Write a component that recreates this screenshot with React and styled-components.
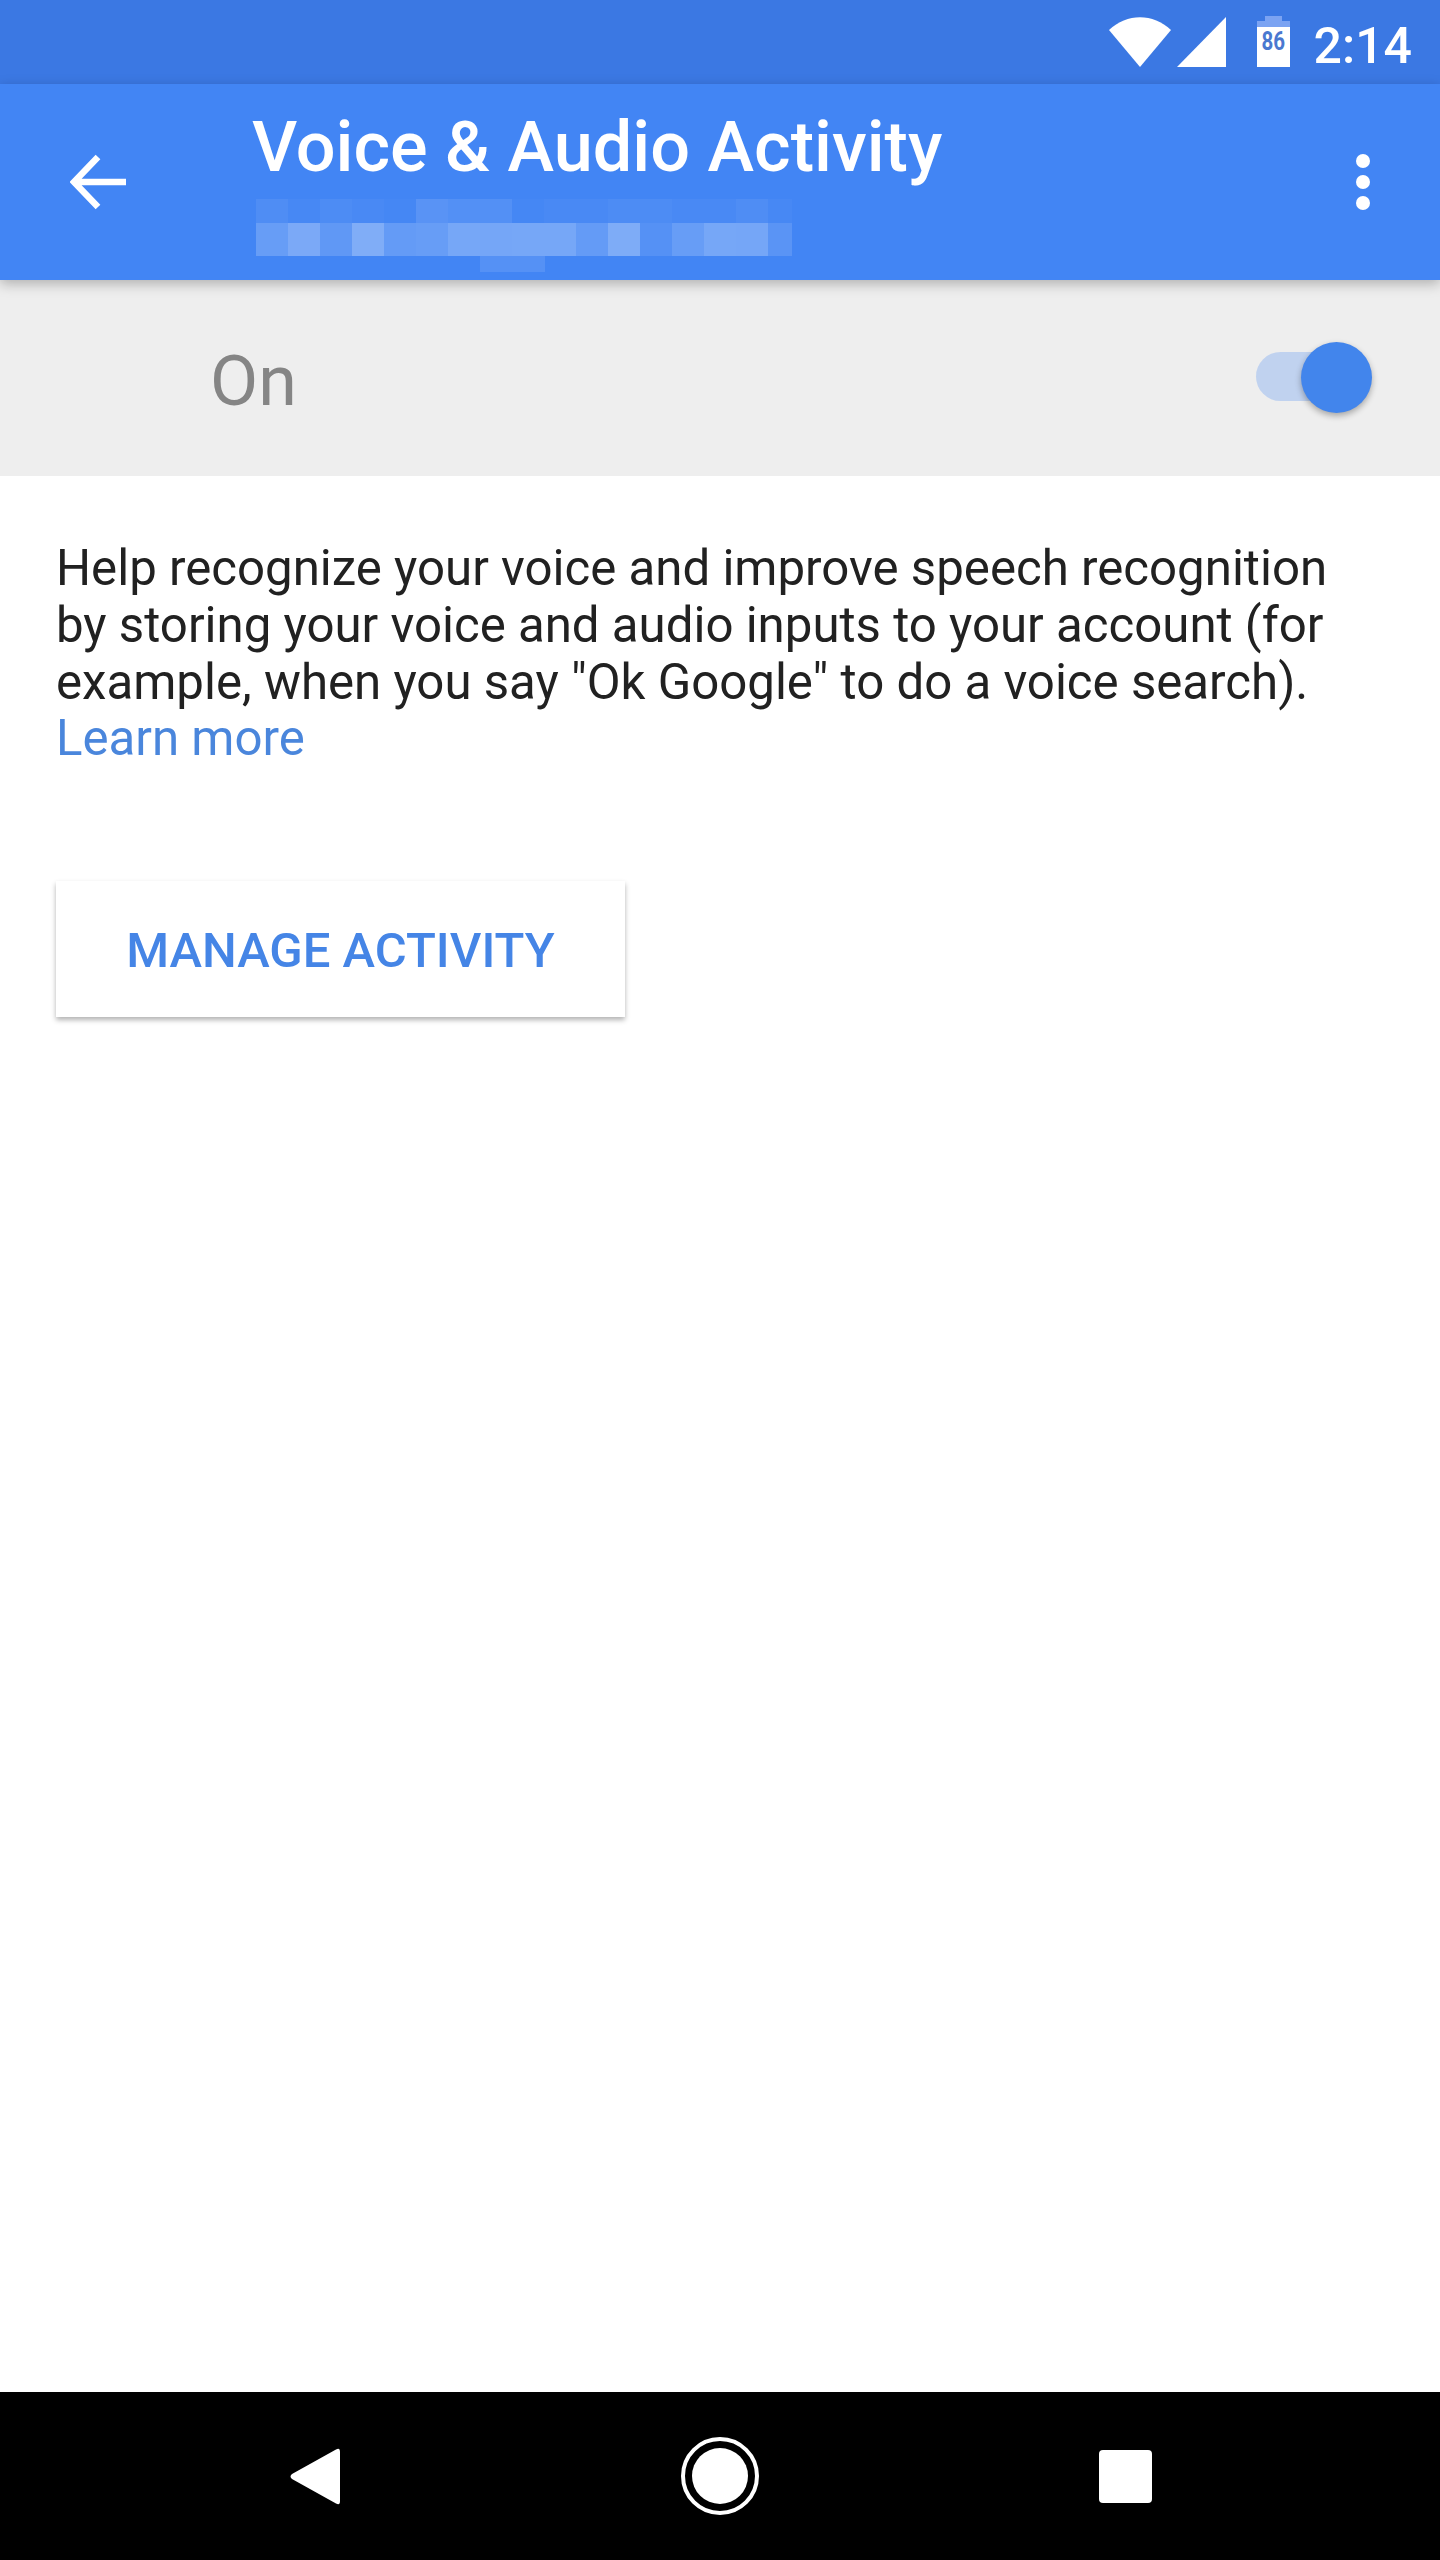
import React from "react";
import styled, { createGlobalStyle } from "styled-components";

const GlobalStyle = createGlobalStyle`
  html, body {
    margin: 0;
    padding: 0;
    background: #fff;
  }
  body {
    font-family: Roboto, "Liberation Sans", sans-serif;
  }
`;

const mosaicTop = [0.07, 0.03, 0.06, 0.04, 0.02, 0.12, 0.09, 0.09, 0.02, 0.04, 0.04, 0.06, 0.06, 0.04, 0.04, 0.07, 0.03];
const mosaicBottom = [0.2, 0.3, 0.16, 0.33, 0.18, 0.2, 0.28, 0.27, 0.28, 0.28, 0.18, 0.32, 0.1, 0.2, 0.28, 0.27, 0.13];

function App() {
  return (
    <Page>
      <GlobalStyle />
      <StatusBar>
        <svg width="62" height="50" viewBox="0 0 62 50">
          <path d="M0 13 C18 -4 44 -4 62 13 L31 50 Z" fill="#fff" />
        </svg>
        <SignalIcon width="49" height="50" viewBox="0 0 49 50">
          <path d="M49 0 V50 H0 Z" fill="#fff" />
        </SignalIcon>
        <Battery>
          <BatteryCap />
          <BatteryTop />
          <BatteryBody>
            <BatteryLevel>86</BatteryLevel>
          </BatteryBody>
        </Battery>
        <Clock>2:14</Clock>
      </StatusBar>
      <AppBar>
        <BackButton>
          <svg width="56" height="56" viewBox="0 0 56 56">
            <path d="M28 3 L4 28 L28 53 M4 28 H56" fill="none" stroke="#fff" strokeWidth="6.5" />
          </svg>
        </BackButton>
        <TitleBlock>
          <Title>Voice &amp; Audio Activity</Title>
          <Mosaic>
            {mosaicTop.map((o, i) => (
              <MosaicCell key={"t" + i} style={{ opacity: o }} />
            ))}
            {mosaicBottom.map((o, i) => (
              <MosaicCell key={"b" + i} style={{ opacity: o }} />
            ))}
          </Mosaic>
          <MosaicStub />
        </TitleBlock>
        <MoreButton>
          <Dot />
          <Dot />
          <Dot />
        </MoreButton>
      </AppBar>
      <ToggleRow>
        <ToggleLabel>On</ToggleLabel>
        <Switch>
          <Track />
          <Thumb />
        </Switch>
      </ToggleRow>
      <Content>
        <Description>
          Help recognize your voice and improve speech recognition
          <br />
          by storing your voice and audio inputs to your account (for
          <br />
          example, when you say "Ok Google" to do a voice search).
          <br />
          <LearnMore>Learn more</LearnMore>
        </Description>
        <ManageButton>MANAGE ACTIVITY</ManageButton>
      </Content>
      <NavBar>
        <svg width="50" height="57" viewBox="0 0 50 57">
          <path d="M46 1.5 Q50 -1 50 4 V53 Q50 58 46 55.5 L2 31 Q-1 28.5 2 26 Z" fill="#fff" />
        </svg>
        <HomeButton>
          <HomeInner />
        </HomeButton>
        <RecentButton />
      </NavBar>
    </Page>
  );
}

const Page = styled.div`
  width: 1440px;
  height: 2560px;
  display: flex;
  flex-direction: column;
  background: #fff;
  overflow: hidden;
`;

const StatusBar = styled.div`
  height: 84px;
  flex: none;
  display: flex;
  align-items: flex-start;
  padding: 17px 28px 0 0;
  box-sizing: border-box;
  justify-content: flex-end;
  background: #3b78e3;
`;

const SignalIcon = styled.svg`
  margin-left: 6px;
`;

const Battery = styled.div`
  width: 33px;
  height: 51px;
  margin: -1px 0 0 31px;
  display: flex;
  flex-direction: column;
  align-items: center;
`;

const BatteryCap = styled.div`
  width: 17px;
  height: 5px;
  background: #7ba3f2;
`;

const BatteryTop = styled.div`
  width: 100%;
  height: 6px;
  background: #7ba3f2;
`;

const BatteryBody = styled.div`
  width: 100%;
  flex: 1;
  background: #fff;
  color: #4a78d0;
  font-size: 25px;
  font-weight: 700;
  line-height: 30px;
  text-align: center;
`;

const BatteryLevel = styled.span`
  display: inline-block;
  transform: scaleX(0.82);
`;

const Clock = styled.div`
  margin: -1px 0 0 24px;
  color: #fff;
  font-size: 50px;
  font-weight: 500;
  line-height: 60px;
`;

const AppBar = styled.header`
  height: 196px;
  flex: none;
  display: flex;
  align-items: flex-start;
  background: #4285f4;
  position: relative;
  z-index: 1;
  box-shadow: 0 4px 12px rgba(0, 0, 0, 0.26);
`;

const BackButton = styled.div`
  width: 252px;
  flex: none;
  padding: 70px 0 0 70px;
  box-sizing: border-box;
  display: flex;
`;

const TitleBlock = styled.div`
  flex: 1;
  display: flex;
  flex-direction: column;
`;

const Title = styled.h1`
  margin: 23px 0 0;
  color: #fff;
  font-size: 70.2px;
  font-weight: 500;
  line-height: 80px;
  white-space: nowrap;
`;

const Mosaic = styled.div`
  margin: 12px 0 0 4px;
  display: grid;
  grid-template-columns: repeat(16, 32px) 24px;
  grid-template-rows: 24px 33px;
`;

const MosaicCell = styled.div`
  background: #fff;
`;

const MosaicStub = styled.div`
  width: 65px;
  height: 16px;
  margin-left: 228px;
  background: rgba(255, 255, 255, 0.1);
`;

const MoreButton = styled.div`
  width: 106px;
  flex: none;
  padding: 70px 70px 0 0;
  box-sizing: border-box;
  display: flex;
  flex-direction: column;
  align-items: flex-end;
  gap: 7px;
`;

const Dot = styled.span`
  width: 14px;
  height: 14px;
  border-radius: 50%;
  background: #fff;
`;

const ToggleRow = styled.div`
  height: 196px;
  flex: none;
  display: flex;
  align-items: center;
  justify-content: space-between;
  padding: 0 68px 0 210px;
  box-sizing: border-box;
  background: #eeeeee;
`;

const ToggleLabel = styled.div`
  padding-top: 6px;
  color: #858585;
  font-size: 70px;
  line-height: 80px;
`;

const Switch = styled.div`
  width: 116px;
  height: 71px;
  position: relative;
  margin-top: -1px;
`;

const Track = styled.div`
  width: 100px;
  height: 49px;
  margin-top: 10px;
  border-radius: 25px;
  background: #c0d2ef;
`;

const Thumb = styled.div`
  position: absolute;
  top: 0;
  right: 0;
  width: 71px;
  height: 71px;
  border-radius: 50%;
  background: #4285ec;
  box-shadow: 0 3px 6px rgba(0, 0, 0, 0.3);
`;

const Content = styled.main`
  flex: 1;
  padding: 64px 56px 0;
  display: flex;
  flex-direction: column;
  align-items: flex-start;
`;

const Description = styled.p`
  margin: 0;
  color: #212121;
  font-size: 49.2px;
  line-height: 56.75px;
  white-space: nowrap;
`;

const LearnMore = styled.span`
  color: #4a86dc;
`;

const ManageButton = styled.div`
  width: 569px;
  height: 136px;
  margin: 114px 0 0;
  padding-top: 3px;
  box-sizing: border-box;
  display: flex;
  align-items: center;
  justify-content: center;
  background: #fff;
  color: #4585e6;
  font-size: 49px;
  font-weight: 500;
  box-shadow: 0 3px 5px rgba(0, 0, 0, 0.3);
`;

const NavBar = styled.nav`
  height: 168px;
  flex: none;
  display: flex;
  align-items: center;
  background: #000;
  padding: 0 288px 0 290px;
  box-sizing: border-box;
  justify-content: space-between;
`;

const HomeButton = styled.div`
  width: 78px;
  height: 78px;
  box-sizing: border-box;
  border: 4px solid #fff;
  border-radius: 50%;
  display: flex;
  align-items: center;
  justify-content: center;
`;

const HomeInner = styled.div`
  width: 56px;
  height: 56px;
  border-radius: 50%;
  background: #fff;
`;

const RecentButton = styled.div`
  width: 53px;
  height: 53px;
  border-radius: 4px;
  background: #fff;
`;

export default App;
